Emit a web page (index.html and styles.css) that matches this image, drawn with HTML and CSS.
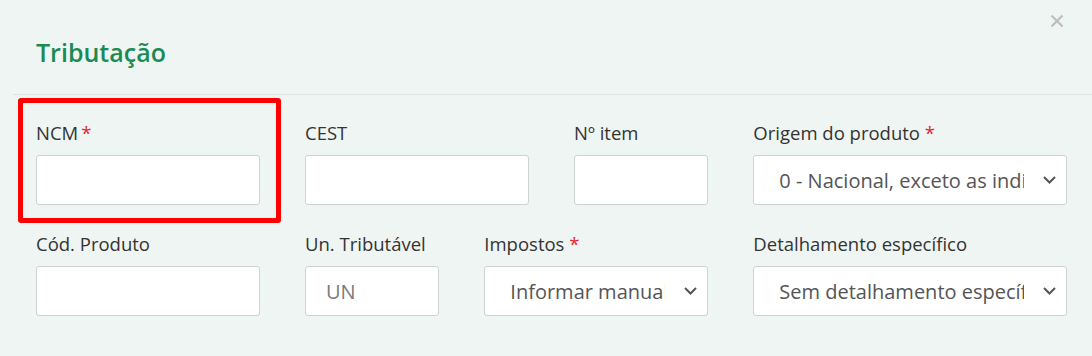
FILE: index.html
```html
<!DOCTYPE html>
<html lang="pt-BR">
<head>
<meta charset="utf-8">
<title>Tributação</title>
<link rel="stylesheet" href="styles.css">
</head>
<body>
<div class="modal">
  <div class="modal-header">
    <h2 class="modal-title">Tributação</h2>
    <button class="close" type="button" aria-label="Fechar">
      <svg width="14" height="14" viewBox="0 0 14 14"><path d="M1.5 1.5 L12.5 12.5 M12.5 1.5 L1.5 12.5" stroke="#bdbdbd" stroke-width="2.2" fill="none"/></svg>
    </button>
  </div>
  <div class="modal-body">
    <div class="form-grid">
      <div class="field span-3 highlighted">
        <label class="label">NCM<span class="req tight">*</span></label>
        <input class="control" type="text">
        <div class="highlight-box"></div>
      </div>
      <div class="field span-3">
        <label class="label">CEST</label>
        <input class="control" type="text">
      </div>
      <div class="field span-2">
        <label class="label">Nº item</label>
        <input class="control" type="text">
      </div>
      <div class="field span-4">
        <label class="label">Origem do produto <span class="req">*</span></label>
        <div class="select-wrap">
          <select class="control select"><option>0 - Nacional, exceto as indicadas nos códigos 3, 4, 5 e 8</option></select>
          <svg class="chevron" width="13" height="8" viewBox="0 0 13 8"><path d="M1 1 L6.5 6.5 L12 1" stroke="#555" stroke-width="2" fill="none"/></svg>
        </div>
      </div>

      <div class="field span-3">
        <label class="label">Cód. Produto</label>
        <input class="control" type="text">
      </div>
      <div class="field span-2">
        <label class="label">Un. Tributável</label>
        <input class="control" type="text" placeholder="UN">
      </div>
      <div class="field span-3">
        <label class="label">Impostos <span class="req">*</span></label>
        <div class="select-wrap">
          <select class="control select"><option>Informar manualmente</option></select>
          <svg class="chevron" width="13" height="8" viewBox="0 0 13 8"><path d="M1 1 L6.5 6.5 L12 1" stroke="#555" stroke-width="2" fill="none"/></svg>
        </div>
      </div>
      <div class="field span-4">
        <label class="label">Detalhamento específico</label>
        <div class="select-wrap">
          <select class="control select"><option>Sem detalhamento específico</option></select>
          <svg class="chevron" width="13" height="8" viewBox="0 0 13 8"><path d="M1 1 L6.5 6.5 L12 1" stroke="#555" stroke-width="2" fill="none"/></svg>
        </div>
      </div>
    </div>
  </div>
</div>
</body>
</html>
```

FILE: styles.css
```css
* { box-sizing: border-box; }

html, body {
  margin: 0;
  padding: 0;
  background: #eff5f3;
  font-family: "Open Sans", "Noto Sans", "Liberation Sans", sans-serif;
}

.modal {
  width: 1092px;
  height: 356px;
  background: #eff5f3;
  overflow: hidden;
}

.modal-header {
  margin-left: 13px;
  height: 95px;
  border-bottom: 1px solid #dfe3e2;
  display: flex;
  justify-content: space-between;
  align-items: flex-start;
  padding-left: 23px;
  padding-right: 28px;
}

.modal-title {
  margin: 0;
  padding-top: 36px;
  font-size: 25px;
  line-height: 32px;
  font-weight: 600;
  color: #1b8a55;
}

.close {
  margin-top: 14px;
  padding: 0;
  border: 0;
  background: transparent;
  width: 14px;
  height: 14px;
  display: block;
}
.close svg { display: block; }

.modal-body {
  padding: 24px 25px 0 36px;
}

.form-grid {
  display: grid;
  grid-template-columns: repeat(12, 1fr);
  column-gap: 45px;
  row-gap: 25px;
}

.span-2 { grid-column: span 2; }
.span-3 { grid-column: span 3; }
.span-4 { grid-column: span 4; }

.field {
  display: flex;
  flex-direction: column;
  gap: 9px;
  position: relative;
  min-width: 0;
}

.label {
  font-size: 18.5px;
  line-height: 27px;
  color: #333;
  white-space: nowrap;
}

.req {
  color: #e3252b;
}
.req.tight { margin-left: 3px; }

.control {
  display: block;
  width: 100%;
  height: 50px;
  border: 1px solid #cfd2d2;
  border-radius: 3px;
  background: #fff;
  font-family: inherit;
  font-size: 20px;
  color: #555;
  padding: 0 20px;
  outline: none;
}
.control::placeholder { color: #7a7a7a; }

.select-wrap { position: relative; }

.select {
  appearance: none;
  -webkit-appearance: none;
  padding: 0 42px 0 25px;
  white-space: nowrap;
  overflow: hidden;
  text-overflow: clip;
}

.chevron {
  position: absolute;
  right: 11px;
  top: 21px;
  pointer-events: none;
}

.highlight-box {
  position: absolute;
  left: -18px;
  top: -21px;
  width: 263px;
  height: 125px;
  border: 5px solid #ff0000;
  border-radius: 3px;
  pointer-events: none;
}
```
